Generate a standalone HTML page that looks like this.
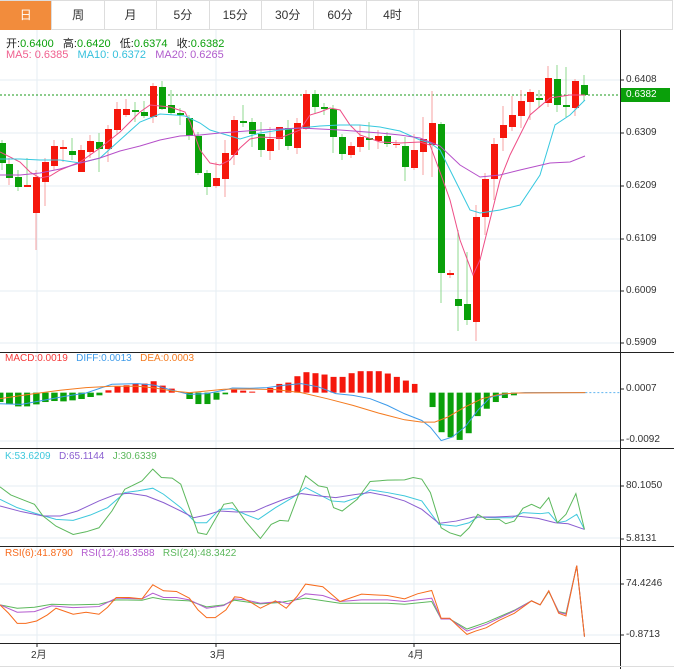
<!DOCTYPE html>
<html><head><meta charset="utf-8"><style>
*{margin:0;padding:0;box-sizing:border-box}
body{width:674px;height:669px;background:#fff;font-family:"Liberation Sans","Noto Sans CJK SC",sans-serif;position:relative;overflow:hidden}
.tabs{position:absolute;left:0;top:0;width:673px;height:30px;border:1px solid #ddd;border-left:none;display:flex}
.tab{width:52.4px;height:29px;border-right:1px solid #ddd;text-align:center;line-height:29px;font-size:12px;color:#333}
.tab.a{background:#f28c3c;color:#fff}
.t{position:absolute;font-size:11px;white-space:nowrap}
.ax{position:absolute;font-size:10px;color:#333;left:626px}
.ns{vector-effect:non-scaling-stroke}
</style></head><body>
<div class="tabs"><div class="tab a">日</div><div class="tab">周</div><div class="tab">月</div><div class="tab">5分</div><div class="tab">15分</div><div class="tab">30分</div><div class="tab">60分</div><div class="tab">4时</div></div>
<svg width="674" height="669" style="position:absolute;left:0;top:0">
<g stroke="#e6edf3" stroke-width="1">
<line x1="0" y1="80" x2="620" y2="80"/><line x1="0" y1="133" x2="620" y2="133"/><line x1="0" y1="186" x2="620" y2="186"/><line x1="0" y1="239" x2="620" y2="239"/><line x1="0" y1="291" x2="620" y2="291"/><line x1="0" y1="343" x2="620" y2="343"/>
<line x1="0" y1="441" x2="620" y2="441"/><line x1="0" y1="486" x2="620" y2="486"/><line x1="0" y1="538" x2="620" y2="538"/><line x1="0" y1="584" x2="620" y2="584"/><line x1="0" y1="635" x2="620" y2="635"/>
<line x1="37" y1="30" x2="37" y2="643"/><line x1="216" y1="30" x2="216" y2="643"/><line x1="414" y1="30" x2="414" y2="643"/>
</g>
<g stroke="#222" stroke-width="1">
<line x1="620.5" y1="30" x2="620.5" y2="669"/>
<line x1="0" y1="352.5" x2="674" y2="352.5"/><line x1="0" y1="448.5" x2="674" y2="448.5"/><line x1="0" y1="546.5" x2="674" y2="546.5"/><line x1="0" y1="643.5" x2="620" y2="643.5"/>
<line x1="620" y1="80" x2="624" y2="80"/><line x1="620" y1="133" x2="624" y2="133"/><line x1="620" y1="186" x2="624" y2="186"/><line x1="620" y1="239" x2="624" y2="239"/><line x1="620" y1="291" x2="624" y2="291"/><line x1="620" y1="343" x2="624" y2="343"/>
<line x1="620" y1="389" x2="624" y2="389"/><line x1="620" y1="440" x2="624" y2="440"/><line x1="620" y1="486" x2="624" y2="486"/><line x1="620" y1="539" x2="624" y2="539"/><line x1="620" y1="584" x2="624" y2="584"/><line x1="620" y1="635" x2="624" y2="635"/>
<line x1="37" y1="643" x2="37" y2="647"/><line x1="216" y1="643" x2="216" y2="647"/><line x1="414" y1="643" x2="414" y2="647"/>
</g>
<line x1="0" y1="666.5" x2="674" y2="666.5" stroke="#ddd"/>
<line x1="0" y1="95" x2="620" y2="95" stroke="#1a9a1a" stroke-dasharray="2,2"/>
<g stroke-width="1">
<g stroke="#8fd88f"><line x1="2" y1="140" x2="2" y2="170"/><line x1="27" y1="158" x2="27" y2="185"/><line x1="18" y1="170" x2="18" y2="191"/><line x1="72" y1="138" x2="72" y2="160"/><line x1="99" y1="133" x2="99" y2="172"/><line x1="135" y1="102" x2="135" y2="122"/><line x1="144" y1="101" x2="144" y2="118"/><line x1="162" y1="81" x2="162" y2="110"/><line x1="171" y1="90" x2="171" y2="115"/><line x1="180" y1="108" x2="180" y2="125"/><line x1="189" y1="115" x2="189" y2="140"/><line x1="198" y1="132" x2="198" y2="175"/><line x1="207" y1="170" x2="207" y2="195"/><line x1="243" y1="105" x2="243" y2="127"/><line x1="252" y1="118" x2="252" y2="147"/><line x1="261" y1="122" x2="261" y2="157"/><line x1="288" y1="120" x2="288" y2="150"/><line x1="315" y1="90" x2="315" y2="114"/><line x1="324" y1="103" x2="324" y2="115"/><line x1="333" y1="105" x2="333" y2="153"/><line x1="342" y1="134" x2="342" y2="160"/><line x1="369" y1="122" x2="369" y2="150"/><line x1="387" y1="132" x2="387" y2="147"/><line x1="405" y1="137" x2="405" y2="181"/><line x1="441" y1="122" x2="441" y2="303"/><line x1="458" y1="230" x2="458" y2="331"/><line x1="467" y1="252" x2="467" y2="325"/><line x1="539" y1="90" x2="539" y2="108"/><line x1="557" y1="65" x2="557" y2="112"/><line x1="566" y1="67" x2="566" y2="117"/><line x1="584" y1="75" x2="584" y2="101"/></g>
<g stroke="#f7a0a0"><line x1="9" y1="158" x2="9" y2="185"/><line x1="36" y1="170" x2="36" y2="250"/><line x1="45" y1="158" x2="45" y2="206"/><line x1="54" y1="140" x2="54" y2="170"/><line x1="63" y1="140" x2="63" y2="162"/><line x1="81" y1="145" x2="81" y2="172"/><line x1="90" y1="135" x2="90" y2="158"/><line x1="108" y1="125" x2="108" y2="162"/><line x1="117" y1="102" x2="117" y2="134"/><line x1="126" y1="99" x2="126" y2="117"/><line x1="153" y1="83" x2="153" y2="123"/><line x1="216" y1="162" x2="216" y2="188"/><line x1="225" y1="140" x2="225" y2="197"/><line x1="234" y1="116" x2="234" y2="165"/><line x1="270" y1="127" x2="270" y2="160"/><line x1="279" y1="127" x2="279" y2="150"/><line x1="297" y1="118" x2="297" y2="154"/><line x1="306" y1="90" x2="306" y2="130"/><line x1="351" y1="142" x2="351" y2="158"/><line x1="360" y1="125" x2="360" y2="152"/><line x1="378" y1="130" x2="378" y2="149"/><line x1="396" y1="140" x2="396" y2="148"/><line x1="414" y1="134" x2="414" y2="170"/><line x1="423" y1="117" x2="423" y2="175"/><line x1="432" y1="91" x2="432" y2="177"/><line x1="450" y1="270" x2="450" y2="278"/><line x1="476" y1="205" x2="476" y2="341"/><line x1="485" y1="173" x2="485" y2="235"/><line x1="494" y1="138" x2="494" y2="200"/><line x1="503" y1="106" x2="503" y2="151"/><line x1="512" y1="96" x2="512" y2="131"/><line x1="521" y1="90" x2="521" y2="128"/><line x1="530" y1="89" x2="530" y2="120"/><line x1="548" y1="66" x2="548" y2="107"/><line x1="575" y1="79" x2="575" y2="116"/></g>
</g>
<g fill="#0aa00a">
<rect x="-1" y="143" width="7" height="20"/><rect x="6" y="164" width="7" height="14"/><rect x="15" y="177" width="7" height="10"/><rect x="69" y="151" width="7" height="4"/><rect x="96" y="142" width="7" height="7"/><rect x="132" y="110" width="7" height="2"/><rect x="141" y="112" width="7" height="4"/><rect x="159" y="87" width="7" height="22"/><rect x="168" y="105" width="7" height="8"/><rect x="177" y="113" width="7" height="2"/><rect x="186" y="118" width="7" height="18"/><rect x="195" y="136" width="7" height="37"/><rect x="204" y="173" width="7" height="14"/><rect x="240" y="121" width="7" height="2"/><rect x="249" y="122" width="7" height="12"/><rect x="258" y="134" width="7" height="16"/><rect x="285" y="128" width="7" height="18"/><rect x="312" y="94" width="7" height="13"/><rect x="321" y="107" width="7" height="2"/><rect x="330" y="109" width="7" height="28"/><rect x="339" y="137" width="7" height="17"/><rect x="366" y="138" width="7" height="2"/><rect x="384" y="136" width="7" height="8"/><rect x="402" y="146" width="7" height="21"/><rect x="438" y="124" width="7" height="149"/><rect x="455" y="299" width="7" height="7"/><rect x="464" y="304" width="7" height="16"/><rect x="536" y="98" width="7" height="2"/><rect x="554" y="79" width="7" height="26"/><rect x="563" y="105" width="7" height="2"/><rect x="581" y="85" width="7" height="10"/>
</g>
<g fill="#f5170c">
<rect x="24" y="185" width="7" height="2"/><rect x="33" y="177" width="7" height="36"/><rect x="42" y="162" width="7" height="20"/><rect x="51" y="146" width="7" height="20"/><rect x="60" y="147" width="7" height="2"/><rect x="78" y="150" width="7" height="22"/><rect x="87" y="141" width="7" height="11"/><rect x="105" y="129" width="7" height="20"/><rect x="114" y="109" width="7" height="21"/><rect x="123" y="109" width="7" height="6"/><rect x="150" y="86" width="7" height="31"/><rect x="213" y="178" width="7" height="8"/><rect x="222" y="153" width="7" height="26"/><rect x="231" y="120" width="7" height="35"/><rect x="267" y="139" width="7" height="12"/><rect x="276" y="127" width="7" height="12"/><rect x="294" y="123" width="7" height="25"/><rect x="303" y="94" width="7" height="35"/><rect x="348" y="146" width="7" height="9"/><rect x="357" y="137" width="7" height="10"/><rect x="375" y="136" width="7" height="5"/><rect x="393" y="144" width="7" height="1"/><rect x="411" y="150" width="7" height="18"/><rect x="420" y="139" width="7" height="13"/><rect x="429" y="123" width="7" height="22"/><rect x="447" y="273" width="7" height="2"/><rect x="473" y="217" width="7" height="105"/><rect x="482" y="179" width="7" height="38"/><rect x="491" y="144" width="7" height="35"/><rect x="500" y="125" width="7" height="13"/><rect x="509" y="115" width="7" height="12"/><rect x="518" y="101" width="7" height="15"/><rect x="527" y="92" width="7" height="10"/><rect x="545" y="78" width="7" height="25"/><rect x="572" y="81" width="7" height="27"/>
</g>
<g fill="none" stroke-width="1">
<polyline stroke="#ee4d86" points="0,152 20,162 30,172 40,178 50,176 60,170 80,162 100,148 120,132 140,112 150,105 170,107 185,112 190,122 200,150 210,163 220,165 230,160 240,148 250,139 260,137 280,138 300,130 310,115 320,112 330,108 340,110 350,125 360,135 380,142 400,143 420,142 430,145 440,172 450,200 460,240 473,275 480,260 490,220 500,180 510,155 530,115 550,98 570,95 585,95"/>
<polyline stroke="#36c8df" points="0,159 20,159 40,160 60,160 80,163 100,158 120,140 140,122 160,114 175,115 185,116 200,123 210,130 220,133 240,139 260,133 280,130 300,128 320,126 340,125 360,125 380,127 400,131 420,140 430,143 440,150 460,190 470,210 480,213 500,210 520,205 540,175 555,125 570,115 585,100"/>
<polyline stroke="#b54fc9" points="0,175 20,175 40,173 60,169 80,163 100,158 120,151 140,146 160,140 180,136 200,135 220,133 260,130 300,128 340,130 380,133 400,135 420,138 440,146 460,165 480,177 500,175 520,170 550,163 570,162 585,156"/>
</g>
<g transform="translate(0,340) scale(0.4304,0.3353)">
<g fill="#0aa00a">
<rect x="0" y="157" width="8" height="28"/><rect x="14" y="157" width="16" height="35"/><rect x="35" y="157" width="15" height="41"/><rect x="56" y="157" width="14" height="41"/><rect x="77" y="157" width="15" height="35"/><rect x="98" y="157" width="15" height="28"/><rect x="119" y="157" width="15" height="25"/><rect x="140" y="157" width="15" height="26"/><rect x="161" y="157" width="15" height="23"/><rect x="182" y="157" width="15" height="19"/><rect x="203" y="157" width="15" height="13"/><rect x="224" y="157" width="14" height="8"/>
<rect x="433" y="157" width="15" height="19"/><rect x="454" y="157" width="14" height="34"/><rect x="475" y="157" width="14" height="34"/><rect x="496" y="157" width="14" height="21"/><rect x="517" y="157" width="13" height="5"/>
<rect x="998" y="157" width="14" height="43"/><rect x="1019" y="157" width="14" height="118"/><rect x="1040" y="157" width="14" height="133"/><rect x="1061" y="157" width="14" height="141"/><rect x="1082" y="157" width="14" height="121"/><rect x="1103" y="157" width="14" height="70"/><rect x="1124" y="157" width="14" height="48"/><rect x="1145" y="157" width="14" height="28"/><rect x="1166" y="157" width="14" height="16"/><rect x="1187" y="157" width="14" height="8"/>
</g>
<g fill="#f5170c">
<rect x="245" y="150" width="14" height="7"/><rect x="266" y="138" width="14" height="19"/><rect x="287" y="135" width="14" height="22"/><rect x="308" y="131" width="14" height="26"/><rect x="329" y="130" width="14" height="27"/><rect x="350" y="123" width="14" height="34"/><rect x="371" y="136" width="14" height="21"/><rect x="392" y="145" width="14" height="12"/>
<rect x="537" y="148" width="14" height="9"/><rect x="558" y="151" width="14" height="6"/><rect x="579" y="154" width="14" height="3"/><rect x="621" y="143" width="14" height="14"/><rect x="642" y="131" width="14" height="26"/><rect x="663" y="127" width="14" height="30"/><rect x="684" y="108" width="14" height="49"/><rect x="705" y="96" width="14" height="61"/><rect x="726" y="99" width="14" height="58"/><rect x="747" y="103" width="14" height="54"/><rect x="768" y="110" width="14" height="47"/><rect x="789" y="110" width="14" height="47"/><rect x="810" y="99" width="14" height="58"/><rect x="831" y="93" width="14" height="64"/><rect x="852" y="93" width="14" height="64"/><rect x="873" y="93" width="14" height="64"/><rect x="894" y="100" width="14" height="57"/><rect x="915" y="110" width="14" height="47"/><rect x="936" y="121" width="14" height="36"/><rect x="957" y="131" width="13" height="26"/>
</g>
<g fill="none" stroke-width="1">
<line class="ns" x1="1360" y1="157" x2="1440" y2="157" stroke="#5fb4f0" stroke-dasharray="2,2"/>
<polyline class="ns" stroke="#3d9bea" points="0,190 50,192 100,180 150,168 200,158 260,132 320,130 360,135 400,150 440,162 480,160 520,150 540,143 580,144 620,142 660,135 700,130 740,140 780,160 820,165 860,175 900,195 940,220 980,240 1000,260 1025,300 1050,290 1080,260 1110,210 1140,170 1180,160 1220,157 1360,157"/>
<polyline class="ns" stroke="#f47b20" points="0,175 80,160 140,150 200,142 260,138 320,138 360,143 400,152 440,157 480,152 520,147 580,146 640,148 700,157 760,175 820,195 880,218 940,238 980,245 1010,245 1040,230 1080,200 1120,175 1160,162 1200,158 1360,157"/>
<polyline class="ns" stroke="#3ec8dc" points="0,475 40,500 90,520 130,535 170,538 210,522 250,500 290,455 320,450 355,442 380,460 420,500 455,545 480,545 510,505 540,503 570,520 600,535 640,500 680,470 710,440 740,460 770,480 800,483 830,470 860,447 900,455 940,465 980,480 1020,550 1060,555 1090,545 1110,528 1150,530 1190,530 1215,515 1255,518 1275,515 1295,545 1315,540 1340,520 1358,565"/>
<polyline class="ns" stroke="#8a5ed0" points="0,495 50,512 100,525 140,525 180,510 230,480 270,460 300,457 340,465 380,485 420,510 450,530 480,522 510,510 550,513 590,512 620,495 660,475 700,458 740,465 780,470 820,462 860,455 900,465 940,480 980,505 1020,547 1060,540 1100,528 1150,528 1200,525 1250,532 1290,545 1320,548 1358,565"/>
<polyline class="ns" stroke="#5cb85c" points="0,438 25,462 60,480 80,490 100,525 130,555 170,580 200,572 230,560 260,510 290,445 330,420 355,385 375,410 400,412 420,430 460,575 480,580 520,490 540,485 570,540 605,592 630,550 650,538 670,540 710,405 740,435 760,440 775,500 795,510 830,475 860,422 900,418 940,417 960,410 980,415 1000,455 1025,560 1045,575 1070,585 1090,560 1110,520 1130,535 1160,535 1175,548 1195,540 1215,502 1235,490 1255,502 1275,470 1295,545 1315,520 1338,458 1358,565"/>
<polyline class="ns" stroke="#5cb85c" points="0,790 40,800 80,797 120,788 170,790 230,788 270,775 330,776 355,768 380,774 440,778 480,796 520,790 545,776 605,787 650,783 710,770 790,785 900,785 940,788 1003,780 1025,832 1045,832 1085,862 1130,842 1195,806 1235,778 1255,790 1275,750 1298,810 1315,815 1340,673 1358,885"/>
<polyline class="ns" stroke="#b45bcf" points="0,790 40,812 80,810 120,793 170,798 230,795 270,770 330,772 355,755 380,768 410,768 440,775 480,800 520,792 545,772 570,775 605,785 650,780 670,787 710,757 750,762 790,780 840,775 900,775 940,780 970,775 1003,770 1025,832 1045,832 1085,868 1130,848 1195,808 1235,778 1255,790 1275,748 1298,812 1315,818 1340,673 1358,885"/>
<polyline class="ns" stroke="#f76b1c" points="0,790 20,815 40,845 60,845 85,838 110,820 130,800 170,818 200,812 230,818 250,797 270,768 300,768 330,772 355,730 380,748 410,750 440,770 460,805 480,828 500,828 525,805 545,766 560,768 580,780 605,800 640,778 665,800 690,765 710,728 750,736 790,780 840,758 870,760 900,762 940,772 970,757 1003,747 1025,830 1045,830 1065,855 1085,878 1105,868 1130,858 1160,836 1195,815 1235,778 1255,790 1275,748 1298,815 1315,823 1340,673 1358,885"/>
</g>
</g>
<rect x="621" y="88" width="49" height="14" fill="#0aa00a"/>
</svg>
<div class="t" style="left:6px;top:35px;color:#222">开:<span style="color:#0aa00a">0.6400</span>&nbsp;&nbsp; 高:<span style="color:#0aa00a">0.6420</span>&nbsp;&nbsp; 低:<span style="color:#0aa00a">0.6374</span>&nbsp;&nbsp; 收:<span style="color:#0aa00a">0.6382</span></div>
<div class="t" style="left:6px;top:49px"><span style="color:#f0608f">MA5: 0.6385</span>&nbsp;&nbsp; <span style="color:#36c0dc">MA10: 0.6372</span>&nbsp;&nbsp; <span style="color:#b05ccc">MA20: 0.6265</span></div>
<div class="t" style="left:5px;top:353px;font-size:10px"><span style="color:#f53a3a">MACD:0.0019</span>&nbsp;&nbsp; <span style="color:#3d9bea">DIFF:0.0013</span>&nbsp;&nbsp; <span style="color:#f47b20">DEA:0.0003</span></div>
<div class="t" style="left:5px;top:451px;font-size:10px"><span style="color:#3ec8dc">K:53.6209</span>&nbsp;&nbsp; <span style="color:#8a5ed0">D:65.1144</span>&nbsp;&nbsp; <span style="color:#5cb85c">J:30.6339</span></div>
<div class="t" style="left:5px;top:548px;font-size:10px"><span style="color:#f76b1c">RSI(6):41.8790</span>&nbsp;&nbsp; <span style="color:#b45bcf">RSI(12):48.3588</span>&nbsp;&nbsp; <span style="color:#5cb85c">RSI(24):48.3422</span></div>
<div class="ax" style="top:74px">0.6408</div>
<div class="ax" style="top:89px;color:#fff">0.6382</div>
<div class="ax" style="top:127px">0.6309</div>
<div class="ax" style="top:180px">0.6209</div>
<div class="ax" style="top:233px">0.6109</div>
<div class="ax" style="top:285px">0.6009</div>
<div class="ax" style="top:337px">0.5909</div>
<div class="ax" style="top:383px">0.0007</div>
<div class="ax" style="top:434px">-0.0092</div>
<div class="ax" style="top:480px">80.1050</div>
<div class="ax" style="top:533px">5.8131</div>
<div class="ax" style="top:578px">74.4246</div>
<div class="ax" style="top:629px">-0.8713</div>
<div class="t" style="left:31px;top:646px;font-size:10px;color:#333">2月</div>
<div class="t" style="left:210px;top:646px;font-size:10px;color:#333">3月</div>
<div class="t" style="left:408px;top:646px;font-size:10px;color:#333">4月</div>
</body></html>
